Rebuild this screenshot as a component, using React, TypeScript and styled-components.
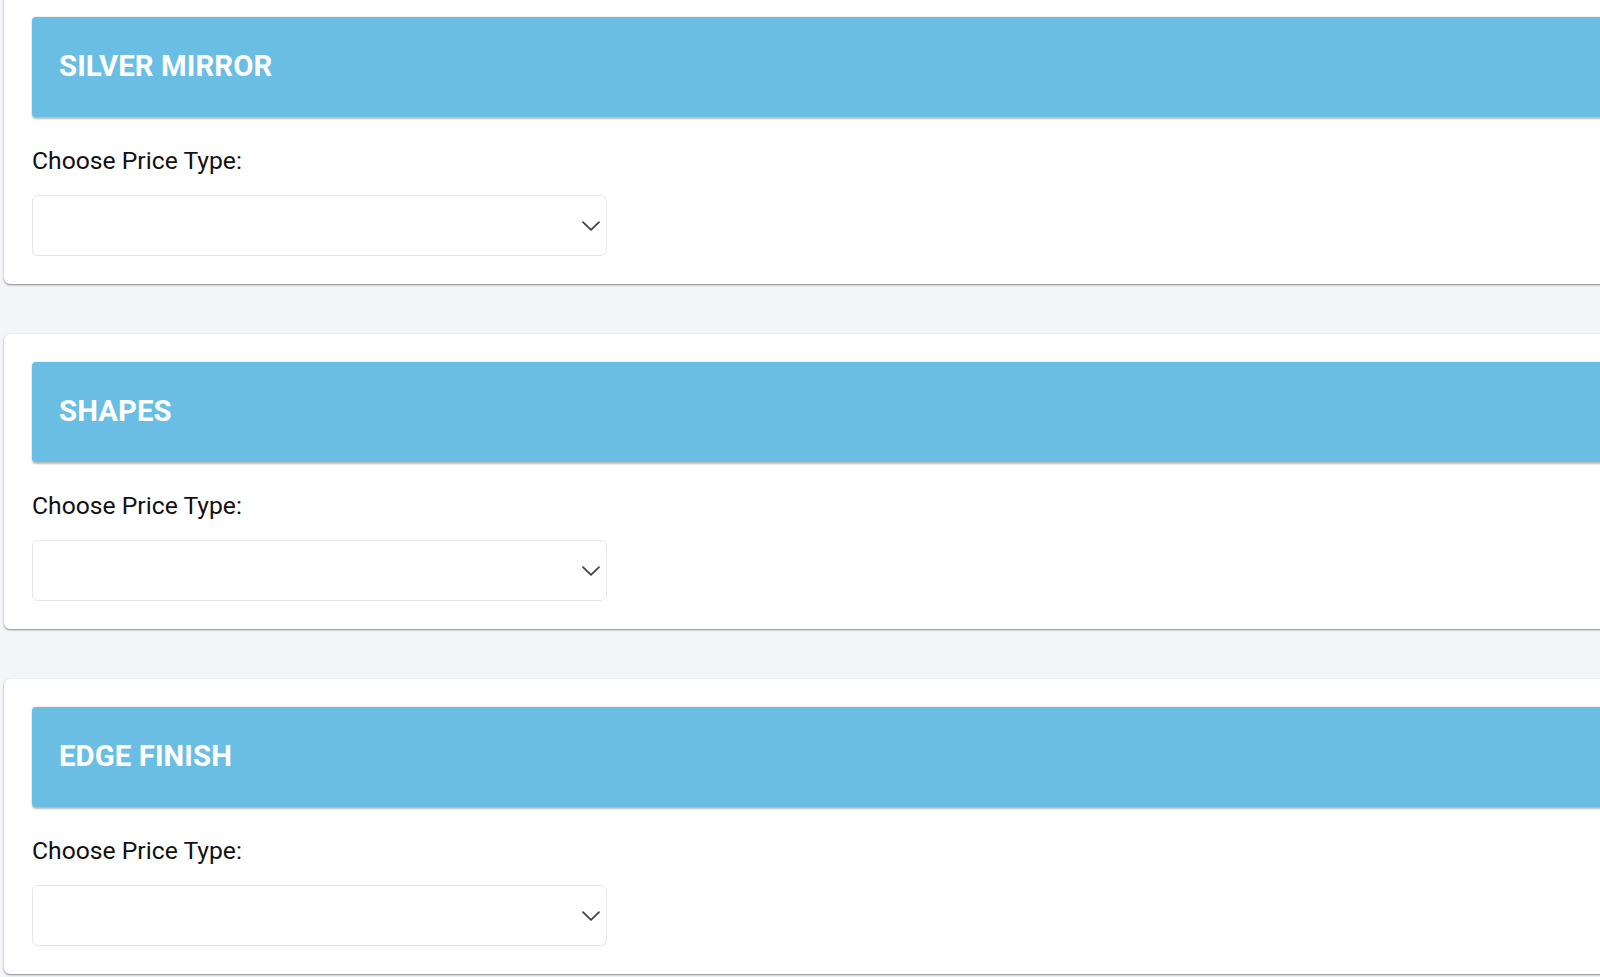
import React from "react";
import styled, { createGlobalStyle } from "styled-components";

const GlobalStyle = createGlobalStyle`
  html, body {
    margin: 0;
    padding: 0;
    background: #f4f5f9;
    overflow: hidden;
  }
  body {
    font-family: Roboto, "Liberation Sans", Arial, sans-serif;
  }
`;

const Page = styled.div`
  width: 1600px;
  height: 977px;
  overflow: hidden;
  padding-left: 4px;
  box-sizing: border-box;
`;

const Stack = styled.div`
  display: flex;
  flex-direction: column;
  gap: 50px;
  margin-top: -11px;
  width: 1700px;
`;

const Card = styled.section`
  background: #ffffff;
  border-radius: 6px;
  padding: 28px 28px 28px 28px;
  box-shadow: 0 1px 2px rgba(0, 0, 0, 0.45), 0 0 1px rgba(0, 0, 0, 0.06);
  display: flex;
  flex-direction: column;
`;

const Header = styled.div`
  height: 100px;
  background: #6abee3;
  border-radius: 4px;
  box-shadow: 0 2px 2px rgba(0, 0, 0, 0.28), 0 -1px 1px rgba(0, 0, 0, 0.06);
  display: flex;
  align-items: center;
  padding-left: 27px;
`;

const Title = styled.h2`
  margin: 0;
  color: #ffffff;
  font-family: Roboto, "Liberation Sans", Arial, sans-serif;
  font-weight: 700;
  font-size: 29.3px;
  letter-spacing: 0.1px;
  line-height: 1;
`;

const Label = styled.label`
  display: block;
  margin-top: 26px;
  font-family: Roboto, "Liberation Sans", Arial, sans-serif;
  font-size: 24.7px;
  line-height: 36px;
  color: #111111;
`;

const SelectBox = styled.div`
  margin-top: 16px;
  width: 575px;
  height: 61px;
  box-sizing: border-box;
  border: 1px solid #e3e7eb;
  border-radius: 6px;
  background: #ffffff;
  display: flex;
  align-items: center;
  justify-content: flex-end;
  padding-right: 6px;
`;

const Chevron = () => (
  <svg width="18" height="10" viewBox="0 0 18 10" fill="none">
    <path d="M1 1.2 L9 8.8 L17 1.2" stroke="#3d3f44" strokeWidth="1.7" strokeLinecap="round" strokeLinejoin="round" />
  </svg>
);

const sections = ["SILVER MIRROR", "SHAPES", "EDGE FINISH"];

export default function App() {
  return (
    <>
      <GlobalStyle />
      <Page>
        <Stack>
          {sections.map((s) => (
            <Card key={s}>
              <Header>
                <Title>{s}</Title>
              </Header>
              <Label>Choose Price Type:</Label>
              <SelectBox>
                <Chevron />
              </SelectBox>
            </Card>
          ))}
        </Stack>
      </Page>
    </>
  );
}
